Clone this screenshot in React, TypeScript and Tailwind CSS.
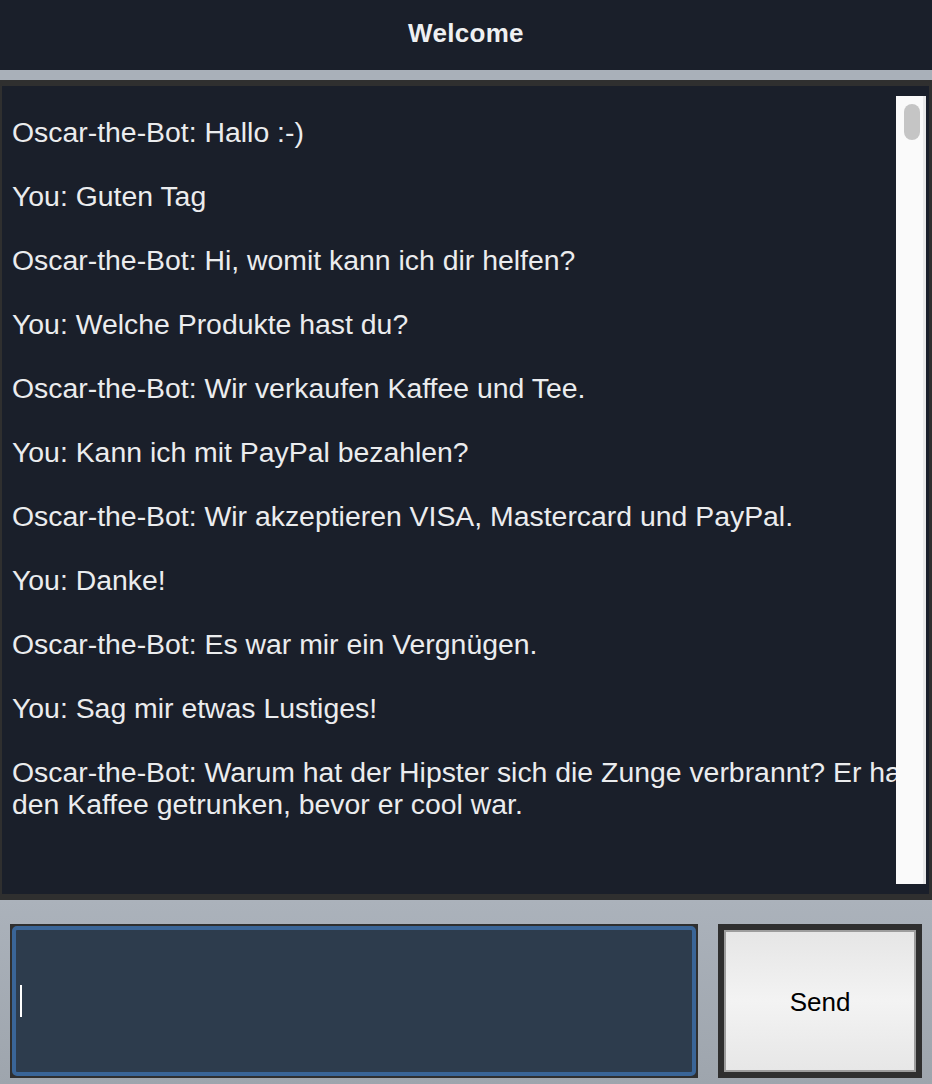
import React from "react";

const messages: string[][] = [
  ["Oscar-the-Bot: Hallo :-)"],
  ["You: Guten Tag"],
  ["Oscar-the-Bot: Hi, womit kann ich dir helfen?"],
  ["You: Welche Produkte hast du?"],
  ["Oscar-the-Bot: Wir verkaufen Kaffee und Tee."],
  ["You: Kann ich mit PayPal bezahlen?"],
  ["Oscar-the-Bot: Wir akzeptieren VISA, Mastercard und PayPal."],
  ["You: Danke!"],
  ["Oscar-the-Bot: Es war mir ein Vergnügen."],
  ["You: Sag mir etwas Lustiges!"],
  [
    "Oscar-the-Bot: Warum hat der Hipster sich die Zunge verbrannt? Er hat",
    "den Kaffee getrunken, bevor er cool war.",
  ],
];

export default function App() {
  return (
    <div
      className="w-[932px] h-[1084px] flex flex-col bg-[#a9b0b9] overflow-hidden"
      style={{ fontFamily: '"Liberation Sans", Arial, sans-serif' }}
    >
      {/* Header */}
      <div className="h-[70px] shrink-0 bg-[#1a1f2a] flex items-center justify-center pb-[4px]">
        <span className="text-[26px] font-bold text-[#eef0f2] tracking-[0.3px]">Welcome</span>
      </div>

      <div className="h-[10px] shrink-0 bg-[#a9b0b9]" />

      {/* Chat area */}
      <div className="h-[820px] shrink-0 border-[#2f2f2f] border-t-[6px] border-l-2 border-r-[3px] border-b-[6px] bg-[#1a1f2a] relative overflow-hidden">
        <div className="pt-[30px] pl-[10px] flex flex-col gap-[32px] text-[28.4px] leading-[32px] text-[#ebecee]">
          {messages.map((m, i) => (
            <div key={i} className="whitespace-nowrap">
              {m.map((line, j) => (
                <div key={j}>{line}</div>
              ))}
            </div>
          ))}
        </div>
        {/* Scrollbar */}
        <div className="absolute left-[894px] top-[10px] bottom-[10px] w-[30px] bg-[#fafafa] border-r-[3px] border-[#e9e9e9]">
          <div className="absolute left-[8px] top-[8px] w-[16px] h-[36px] rounded-full bg-[#c5c5c5]" />
        </div>
      </div>

      {/* Input row */}
      <div className="flex-1 bg-gradient-to-b from-[#abb2bb] to-[#9ea5ad] px-[10px] pt-[24px] flex gap-[20px]">
        <div className="flex-1 h-[154px] border-2 border-[#2f2f2f] bg-[#2f2f2f]">
          <div className="w-full h-full rounded-[5px] border-4 border-[#3a6597] bg-[#2d3c4d] flex items-center pl-[4px]">
            <div className="w-[2px] h-[32px] bg-white" />
          </div>
        </div>
        <div className="w-[204px] h-[154px] border-[6px] border-[#2f2f2f] bg-[#2f2f2f]">
          <div className="w-full h-full border-2 border-[#9d9d9d] bg-gradient-to-b from-[#e6e6e6] via-[#f3f3f3] to-[#e7e7e7] flex items-center justify-center pt-[3px]">
            <span className="text-[26px] text-black">Send</span>
          </div>
        </div>
      </div>
    </div>
  );
}
